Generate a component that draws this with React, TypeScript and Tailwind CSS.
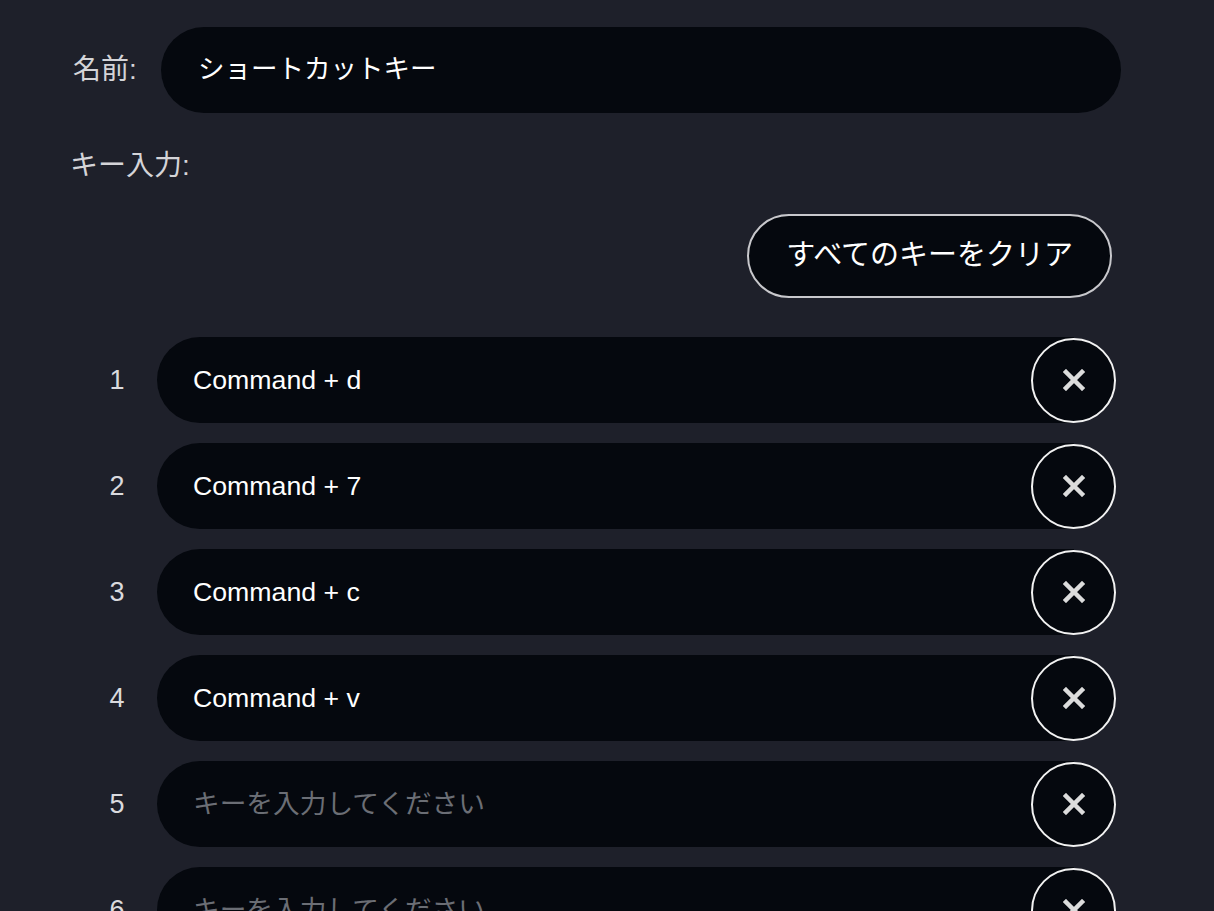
import React from 'react';

const keys = ['Command + d', 'Command + 7', 'Command + c', 'Command + v', '', ''];

function XIcon() {
  return (
    <svg width="22" height="22" viewBox="0 0 22 22" fill="none">
      <path d="M3 3L19 19M19 3L3 19" stroke="#dcdcdc" strokeWidth="4.5" strokeLinecap="square" />
    </svg>
  );
}

export default function App() {
  return (
    <div
      className="min-h-screen bg-[#1e202a] pl-[70px] pt-[27px] overflow-hidden"
      style={{ fontFamily: '"Liberation Sans", "Noto Sans CJK JP", sans-serif' }}
    >
      {/* name */}
      <div className="flex items-center">
        <label className="ml-[3px] w-[88px] text-[28px] leading-[36px] text-[#d4d4d8]">名前:</label>
        <div className="flex h-[86px] w-[960px] items-center rounded-full bg-[#05080e] pl-[37px] text-[26.5px] text-white">
          ショートカットキー
        </div>
      </div>

      <div className="mt-[35px] text-[28px] leading-[36px] text-[#d4d4d8]">キー入力:</div>

      <div className="mt-[30px] flex w-[1042px] justify-end">
        <button className="h-[84px] rounded-full border-2 border-[#c8c8cc] bg-[#05080e] px-[37px] text-[29px] text-white">
          すべてのキーをクリア
        </button>
      </div>

      {/* key list */}
      <div className="mt-[39px] flex flex-col gap-[20px]">
        {keys.map((k, i) => (
          <div key={i} className="flex items-center">
            <div className="ml-[7px] w-[80px] text-center text-[27px] text-[#dadade]">{i + 1}</div>
            <div className="flex h-[86px] w-[917px] items-center rounded-l-full bg-[#05080e] pl-[36px] text-[26.7px]">
              {k ? (
                <span className="text-white">{k}</span>
              ) : (
                <span className="text-[#6b6e75]">キーを入力してください</span>
              )}
            </div>
            <button className="-ml-[43px] flex h-[85px] w-[85px] items-center justify-center rounded-full border-2 border-[#f2f2f2] bg-[#05080e]">
              <XIcon />
            </button>
          </div>
        ))}
      </div>
    </div>
  );
}
